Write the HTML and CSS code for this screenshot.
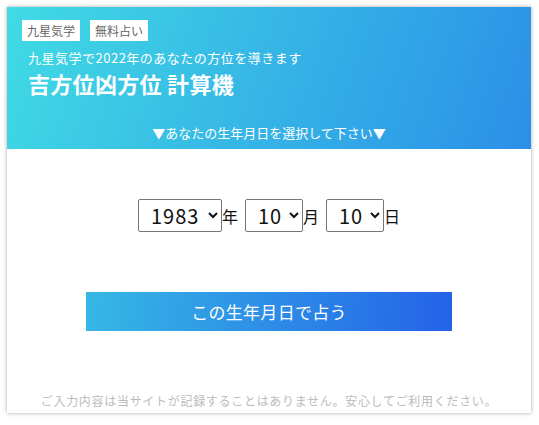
FILE: index.html
```html
<!DOCTYPE html>
<html lang="ja">
<head>
<meta charset="utf-8">
<link rel="stylesheet" href="styles.css">
</head>
<body>
<div class="card">
  <header class="hero">
    <div class="tags">
      <span class="tag">九星気学</span>
      <span class="tag">無料占い</span>
    </div>
    <p class="sub">九星気学で2022年のあなたの方位を導きます</p>
    <h1 class="title">吉方位凶方位 計算機</h1>
    <p class="prompt">▼あなたの生年月日を選択して下さい▼</p>
  </header>
  <main class="content">
    <div class="date-row">
      <select class="sel sel-year"><option>1983</option></select><span class="unit">年</span>
      <select class="sel sel-md"><option>10</option></select><span class="unit">月</span>
      <select class="sel sel-md"><option>10</option></select><span class="unit">日</span>
    </div>
    <button class="go">この生年月日で占う</button>
    <p class="note">ご入力内容は当サイトが記録することはありません。安心してご利用ください。</p>
  </main>
</div>
</body>
</html>
```
FILE: styles.css
```css
html, body { margin: 0; padding: 0; background: #fff; }
body {
  padding: 7px 8px 12px 7px;
  font-family: "Noto Sans CJK JP", "Noto Sans", sans-serif;
}
.card {
  width: 524px;
  height: 406px;
  background: #fff;
  box-shadow: 0 0 4px rgba(0,0,0,0.35);
  display: flex;
  flex-direction: column;
}
.hero {
  height: 142px;
  box-sizing: border-box;
  padding: 13px 15px 0 15px;
  background: linear-gradient(110deg, #40dbe4 0%, #2b8fe8 100%);
  color: #fff;
  display: flex;
  flex-direction: column;
}
.tags { display: flex; gap: 10px; }
.tag {
  background: #fff;
  color: #666;
  font-size: 12px;
  line-height: 21px;
  height: 21px;
  padding: 0 5px;
}
.sub {
  margin: 8px 0 0 6px;
  font-size: 13px;
  line-height: 18px;
  letter-spacing: 0.5px;
}
.title {
  margin: 3px 0 0 6px;
  font-size: 22px;
  font-weight: bold;
  line-height: 27px;
  letter-spacing: 0.3px;
}
.prompt {
  margin: 27px 0 0 0;
  text-align: center;
  font-size: 13px;
  line-height: 18px;
}
.content {
  flex: 1;
  display: flex;
  flex-direction: column;
  align-items: center;
}
.date-row {
  margin-top: 50px;
  display: flex;
  align-items: center;
  height: 33px;
}
.sel {
  height: 33px;
  font-family: "Noto Sans CJK JP", sans-serif;
  font-size: 20px;
  color: #111;
  background: #fff;
  border: 1px solid #767676;
  border-radius: 2px;
  padding: 0 2px 0 8px;
  letter-spacing: 1px;
}
.sel-year { width: 84px; }
.sel-md { width: 58px; }
.unit {
  font-size: 16px;
  color: #111;
  margin-right: 7px;
}
.unit:last-child { margin-right: 0; }
.go {
  margin-top: 60px;
  width: 366px;
  height: 39px;
  border: 0;
  color: #fff;
  font-family: "Noto Sans CJK JP", sans-serif;
  font-size: 17px;
  background: linear-gradient(95deg, #36b8e5 0%, #2462e8 100%);
  letter-spacing: 0.3px;
}
.note {
  margin: 62px 0 0 0;
  font-size: 12px;
  color: #bbb;
  line-height: 16px;
  letter-spacing: 0.7px;
}
```
